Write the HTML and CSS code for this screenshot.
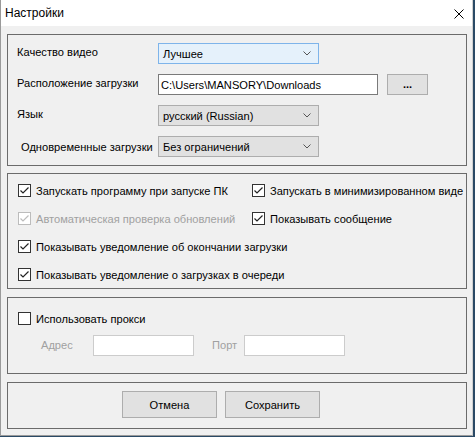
FILE: index.html
```html
<!DOCTYPE html>
<html>
<head>
<meta charset="utf-8">
<link rel="stylesheet" href="styles.css">
</head>
<body>
<div class="window">
  <div class="titlebar">
    <span class="title">Настройки</span>
    <svg class="close" width="10" height="10" viewBox="0 0 10 10"><path d="M0.5 0.5 L9.5 9.5 M9.5 0.5 L0.5 9.5" stroke="#000" stroke-width="1" fill="none"/></svg>
  </div>
  <div class="content">
    <div class="group g1">
      <div class="frow">
        <span class="lbl">Качество видео</span>
        <div class="combo focus"><span>Лучшее</span><svg class="chev" width="8" height="5" viewBox="0 0 8 5"><path d="M0.5 0.5 L4 4 L7.5 0.5" stroke="#555" fill="none"/></svg></div>
      </div>
      <div class="frow">
        <span class="lbl">Расположение загрузки</span>
        <div class="path">C:\Users\MANSORY\Downloads</div>
        <div class="btn dots">...</div>
      </div>
      <div class="frow">
        <span class="lbl">Язык</span>
        <div class="combo"><span>русский (Russian)</span><svg class="chev" width="8" height="5" viewBox="0 0 8 5"><path d="M0.5 0.5 L4 4 L7.5 0.5" stroke="#555" fill="none"/></svg></div>
      </div>
      <div class="frow">
        <span class="lbl indent">Одновременные загрузки</span>
        <div class="combo"><span>Без ограничений</span><svg class="chev" width="8" height="5" viewBox="0 0 8 5"><path d="M0.5 0.5 L4 4 L7.5 0.5" stroke="#555" fill="none"/></svg></div>
      </div>
    </div>

    <div class="group g2">
      <div class="crow">
        <label class="chk"><span class="box on"><svg width="11" height="11" viewBox="0 0 11 11"><path d="M1.5 5.5 L4 8 L9.5 2.5" stroke="#222" stroke-width="1.2" fill="none"/></svg></span>Запускать программу при запуске ПК</label>
        <label class="chk right"><span class="box on"><svg width="11" height="11" viewBox="0 0 11 11"><path d="M1.5 5.5 L4 8 L9.5 2.5" stroke="#222" stroke-width="1.2" fill="none"/></svg></span>Запускать в минимизированном виде</label>
      </div>
      <div class="crow">
        <label class="chk dis"><span class="box on"><svg width="11" height="11" viewBox="0 0 11 11"><path d="M1.5 5.5 L4 8 L9.5 2.5" stroke="#bcbcbc" stroke-width="1.2" fill="none"/></svg></span>Автоматическая проверка обновлений</label>
        <label class="chk right"><span class="box on"><svg width="11" height="11" viewBox="0 0 11 11"><path d="M1.5 5.5 L4 8 L9.5 2.5" stroke="#222" stroke-width="1.2" fill="none"/></svg></span>Показывать сообщение</label>
      </div>
      <div class="crow">
        <label class="chk"><span class="box on"><svg width="11" height="11" viewBox="0 0 11 11"><path d="M1.5 5.5 L4 8 L9.5 2.5" stroke="#222" stroke-width="1.2" fill="none"/></svg></span>Показывать уведомление об окончании загрузки</label>
      </div>
      <div class="crow">
        <label class="chk"><span class="box on"><svg width="11" height="11" viewBox="0 0 11 11"><path d="M1.5 5.5 L4 8 L9.5 2.5" stroke="#222" stroke-width="1.2" fill="none"/></svg></span>Показывать уведомление о загрузках в очереди</label>
      </div>
    </div>

    <div class="group g3">
      <div class="crow">
        <label class="chk"><span class="box"></span>Использовать прокси</label>
      </div>
      <div class="proxy">
        <span class="plbl">Адрес</span>
        <div class="pin"></div>
        <span class="plbl port">Порт</span>
        <div class="pin"></div>
      </div>
    </div>

    <div class="group g4">
      <div class="btn act">Отмена</div>
      <div class="btn act">Сохранить</div>
    </div>
  </div>
</div>
</body>
</html>
```
FILE: styles.css
```css
* { box-sizing: border-box; }
html, body { margin: 0; padding: 0; }
body {
  width: 475px;
  height: 437px;
  background: #2b4a66;
  font-family: "Liberation Sans", Arial, sans-serif;
  font-size: 11.1px;
  color: #000;
  overflow: hidden;
}
.window {
  width: 473px;
  height: 436px;
  background: #f0f0f0;
  border-left: 1px solid #9a9a9a;
  border-right: 1px solid #d0d0d0;
  border-bottom: 1px solid #9a9a9a;
}
.titlebar {
  height: 26px;
  background: #fff;
  display: flex;
  align-items: center;
  justify-content: space-between;
  padding: 0 8px 0 4px;
}
.title { font-size: 12px; }
.close { display: block; margin-top: 2px; }
.content {
  padding: 8px 0 0 6px;
  display: flex;
  flex-direction: column;
}
.group {
  width: 460px;
  border: 1px solid #6b6b6b;
}
.g1 {
  height: 132px;
  padding: 8px 0 0 9px;
  display: flex;
  flex-direction: column;
  gap: 10px;
}
.frow {
  height: 21px;
  display: flex;
  align-items: center;
}
.lbl { width: 141px; white-space: nowrap; margin-top: -4px; }
.lbl.indent { padding-left: 4px; margin-top: 0; }
.combo {
  width: 161px;
  height: 21px;
  background: #e1e1e1;
  border: 1px solid #adadad;
  display: flex;
  align-items: center;
  justify-content: space-between;
  padding: 0 7px 0 4px;
}
.combo.focus {
  background: #e5f1fb;
  border-color: #7eb4ea;
}
.chev { display: block; }
.path {
  width: 220px;
  height: 21px;
  background: #fff;
  border: 1px solid #7a7a7a;
  padding: 0 2px;
  display: flex;
  align-items: center;
  white-space: nowrap;
}
.btn {
  background: #e1e1e1;
  border: 1px solid #adadad;
  display: flex;
  align-items: center;
  justify-content: center;
}
.dots {
  width: 41px;
  height: 21px;
  margin-left: 9px;
  font-weight: bold;
  padding-bottom: 2px;
}
.g2 {
  margin-top: 7px;
  height: 116px;
  padding: 10px 0 0 10px;
  display: flex;
  flex-direction: column;
  gap: 15px;
}
.crow {
  height: 13px;
  display: flex;
  align-items: center;
}
.chk {
  display: flex;
  align-items: center;
  gap: 5px;
  white-space: nowrap;
  width: 234px;
}
.chk.right { width: auto; }
.box {
  width: 13px;
  height: 13px;
  background: #fff;
  border: 1px solid #333;
  display: flex;
  align-items: center;
  justify-content: center;
  flex: none;
}
.box svg { display: block; }
.chk.dis { color: #a0a0a0; }
.chk.dis .box { border-color: #bcbcbc; }
.g3 {
  margin-top: 8px;
  height: 77px;
  padding: 14px 0 0 10px;
  display: flex;
  flex-direction: column;
  gap: 10px;
}
.proxy {
  height: 20px;
  display: flex;
  align-items: center;
  padding-left: 23px;
}
.plbl { color: #a0a0a0; width: 52px; }
.plbl.port { width: 32px; margin-left: 18px; }
.pin {
  width: 101px;
  height: 21px;
  background: #fff;
  border: 1px solid #cccccc;
}
.g4 {
  margin-top: 8px;
  height: 47px;
  padding: 8px 0 0 114px;
  display: flex;
  gap: 8px;
}
.act {
  width: 95px;
  height: 27px;
}
```
